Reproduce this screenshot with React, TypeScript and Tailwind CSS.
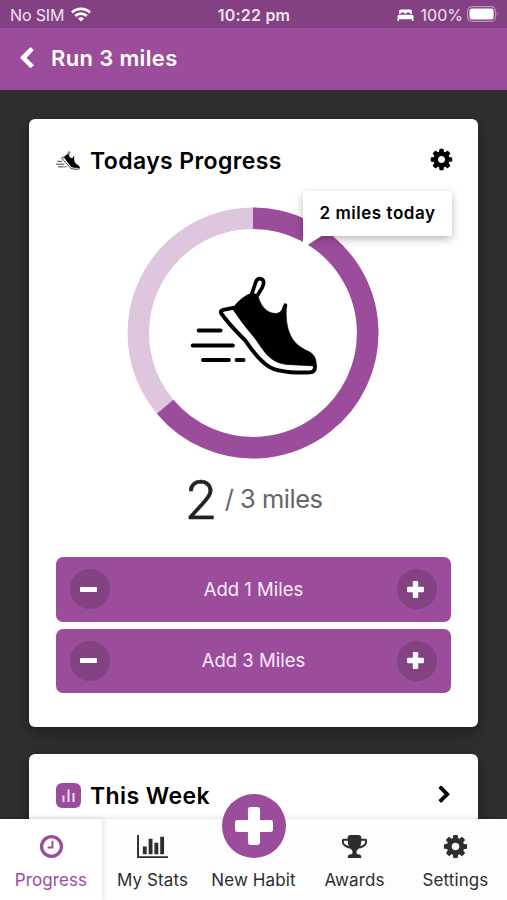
import type { ReactNode } from "react";

const COG =
	"M1152 896q0-106-75-181t-181-75-181 75-75 181 75 181 181 75 181-75 75-181zm512-109v222q0 12-8 23t-20 13l-185 28q-19 54-39 91 35 50 107 138 10 12 10 25t-9 23q-27 37-99 108t-94 71q-12 0-26-9l-138-108q-44 23-91 38-16 136-29 186-7 28-36 28h-222q-14 0-24.5-8.5t-11.5-21.5l-28-184q-49-16-90-37l-141 107q-10 9-25 9-14 0-25-11-126-114-165-168-7-10-7-23 0-12 8-23 15-21 51-66.5t54-70.5q-27-50-41-99l-183-27q-13-2-21-12.5t-8-23.5v-222q0-12 8-23t19-13l186-28q14-46 39-92-40-57-107-138-10-12-10-24 0-10 9-23 26-36 98.5-107.5t94.5-71.5q13 0 26 10l138 107q44-23 91-38 16-136 29-186 7-28 36-28h222q14 0 24.5 8.5t11.5 21.5l28 184q49 16 90 37l142-107q9-9 24-9 13 0 25 10 129 119 165 170 7 8 7 22 0 12-8 23-15 21-51 66.500t-54 70.500q26 50 41 98l183 28q13 2 21 12.500t8 23.500z";
const CLOCK =
	"M1024 544v448q0 14-9 23t-23 9h-320q-14 0-23-9t-9-23v-64q0-14 9-23t23-9h224v-352q0-14 9-23t23-9h64q14 0 23 9t9 23zm416 352q0-148-73-273t-198-198-273-73-273 73-198 198-73 273 73 273 198 198 273 73 273-73 198-198 73-273zm224 0q0 209-103 385.500t-279.500 279.500-385.500 103-385.500-103-279.500-279.500-103-385.500 103-385.500 279.500-279.500 385.500-103 385.500 103 279.500 279.500 103 385.500z";
const BARS =
	"M640 896v512h-256v-512h256zm384-512v1024h-256v-1024h256zm1024 1152v128h-2048v-1536h128v1408h1920zm-640-896v768h-256v-768h256zm384-384v1152h-256v-1152h256z";
const TROPHY =
	"M522 883q-74-162-74-371h-256v96q0 78 94.500 162t235.500 113zm1078-275v-96h-256q0 209-74 371 141-29 235.500-113t94.500-162zm128-128v128q0 71-41.500 143t-112 130-173 97.500-215.500 44.500q-42 54-95 95-38 34-52.500 72.500t-14.500 89.500q0 54 30.500 91t97.500 37q75 0 133.500 45.500t58.500 114.500v64q0 14-9 23t-23 9h-832q-14 0-23-9t-9-23v-64q0-69 58.500-114.500t133.500-45.500q67 0 97.500-37t30.500-91q0-51-14.500-89.500t-52.500-72.500q-53-41-95-95-113-5-215.500-44.500t-173-97.500-112-130-41.500-143v-128q0-40 28-68t68-28h288v-96q0-66 47-113t113-47h576q66 0 113 47t47 113v96h288q40 0 68 28t28 68z";
const CHEVRON =
	"M1427 301l-531 531 531 531q19 19 19 45t-19 45l-166 166q-19 19-45 19t-45-19l-742-742q-19-19-19-45t19-45l742-742q19-19 45-19t45 19l166 166q19 19 19 45t-19 45z";

type GlyphProps = { d: string; className?: string; viewBox?: string };

function Glyph({ d, className, viewBox = "0 0 1792 1792" }: GlyphProps) {
	return (
		<svg viewBox={viewBox} className={className} fill="currentColor">
			<path d={d} />
		</svg>
	);
}

function Shoe({ className }: { className?: string }) {
	return (
		<svg viewBox="60 45 385 305" className={className} fill="none" stroke="#000" strokeLinecap="round" strokeLinejoin="round">
			<path d="M86 211H152M68 256H189M99 300H177M200 300H221" strokeWidth="12" />
			<path
				d="M193 139C206 120 225 106 247 98L264 104C270 132 288 159 317 160C332 159 337 151 341 136L350 138C348 165 349 199 363 227C374 251 394 263 414 273C432 281 440 293 440 318L350 313C313 309 292 289 271 257C256 234 245 222 228 201C212 182 202 164 190 149Z"
				fill="#000"
				strokeWidth="2"
			/>
			<path d="M247 98L258 65C264 49 284 53 281 71C279 83 271 91 264 104" strokeWidth="11" />
			<path d="M342 151L347 135" strokeWidth="11" />
			<path
				d="M190 143L160 149C152 151 151 156 155 161C175 190 205 220 226 241C245 269 266 299 295 318C323 337 370 339 421 337C433 337 436 330 436 318"
				strokeWidth="12"
			/>
		</svg>
	);
}

function Plus({ className }: { className?: string }) {
	return (
		<svg viewBox="0 0 22 22" className={className} fill="currentColor">
			<rect x="0" y="7.5" width="22" height="7" rx="1.4" />
			<rect x="7.500" y="0" width="7" height="22" rx="1.4" />
		</svg>
	);
}

function StatusBar() {
	return (
		<div className="grid h-7 grid-cols-3 items-center bg-[#834183] pt-0.5 pr-2 pl-[10px] text-[16px] text-[#f1e2f1]">
			<div className="flex items-center gap-[6px]">
				<span className="tracking-[-0.15px]">No SIM</span>
				<svg viewBox="0 0 20 15" className="relative -top-px left-px h-[15px] w-5" fill="none" stroke="#fff" strokeWidth="2.700">
					<path d="M1 5.500C6 .6 14 .6 19 5.500M4.200 9C7.500 5.900 12.500 5.900 15.800 9" />
					<path d="M10 14.500L6.900 11.400C8.600 9.800 11.400 9.800 13.100 11.400Z" fill="#fff" stroke="none" />
				</svg>
			</div>
			<div className="pr-[1px] text-center font-semibold tracking-[0.2px] whitespace-nowrap">10:22 pm</div>
			<div className="flex items-center justify-end">
				<svg viewBox="0 0 17 12" className="mr-[7px] h-3 w-[17px]" fill="#fff">
					<path d="M2 5V2.500Q2 .5 4 .5H13Q15 .5 15 2.500V5H13.500Q13.500 3.500 12 3.500H10.500Q9 3.500 9 5H8Q8 3.500 6.500 3.500H5Q3.500 3.500 3.500 5ZM.5 12V7.500Q.5 5.800 2.200 5.800H14.800Q16.500 5.800 16.500 7.500V12H15V10.300H2V12Z" />
				</svg>
				<span className="mr-1">100%</span>
				<svg viewBox="0 0 32 16" className="relative -top-px h-4 w-8">
					<rect x=".6" y=".6" width="28" height="14.800" rx="4.500" fill="none" stroke="#bd93bd" strokeWidth="1.200" />
					<rect x="2.500" y="2.500" width="24.200" height="11" rx="2.500" fill="#fff" />
					<path d="M30.200 6Q32 8 30.200 10Z" fill="#bd93bd" />
				</svg>
			</div>
		</div>
	);
}

function ProgressRing() {
	return (
		<div className="relative mt-[30.500px] ml-[71px] flex h-[252px] w-[252px] items-center justify-center">
			<svg viewBox="-126 -126 252 252" className="absolute inset-0 h-full w-full" fill="none" strokeWidth="21.500">
				<circle r="114.700" stroke="#dfc6df" />
				<path d="M0 -114.700A114.700 114.700 0 1 1 -87.870 73.730" stroke="#9b4c9b" />
			</svg>
			<Shoe className="relative -top-[7px] left-px h-[102px] w-[128px]" />
			{/* Tooltip with its pointer cut into the ring */}
			<div className="absolute -top-4 left-[176px] h-[45px] w-[149px] rounded-[3px] bg-white text-center text-[17px] leading-[44px] font-semibold tracking-[0.55px] whitespace-nowrap shadow-[0_3px_8px_rgba(0,0,0,0.28)]">
				2 miles today
				<svg viewBox="0 0 20 13" className="absolute top-[44px] left-0 h-[13px] w-5" fill="#fff">
					<path d="M0 0H20L0 13Z" />
				</svg>
			</div>
		</div>
	);
}

function AddButton({ label }: { label: string }) {
	return (
		<div className="flex h-[64.500px] items-center justify-between rounded-[7px] bg-[#9b4c9b] px-[14px] text-[#fbebfb]">
			<div className="flex h-10 w-10 items-center justify-center rounded-full bg-[#834383] pr-[3px]">
				<span className="h-[5px] w-[17px] rounded-[1px] bg-white" />
			</div>
			<span className="pt-px text-[18.500px]">{label}</span>
			<div className="flex h-10 w-10 items-center justify-center rounded-full bg-[#834383] pr-[3px] text-white">
				<Plus className="h-[17px] w-[17px]" />
			</div>
		</div>
	);
}

function NavItem({ label, active, children }: { label: string; active?: boolean; children?: ReactNode }) {
	return (
		<div
			className={
				active
					? "flex w-[102px] flex-col items-center bg-white pt-3 text-[#9b4c9b] shadow-[1px_0_5px_rgba(0,0,0,0.12)]"
					: "flex w-[101px] flex-col items-center pt-3 text-[#2b2d2e]"
			}
		>
			<div className="flex h-[30px] items-center justify-center">{children}</div>
			<span className="mt-[7px] text-[17px] leading-6 tracking-[0.1px] whitespace-nowrap">{label}</span>
		</div>
	);
}

export default function App() {
	return (
		<div className="relative flex h-[900px] w-[507px] flex-col overflow-hidden bg-[#2f2f2f] font-[Inter,'Liberation_Sans',sans-serif] text-black">
			<StatusBar />
			<header className="flex h-[62px] shrink-0 items-center bg-[#9b4c9b] pb-[2px] pl-[15px] text-white">
				<Glyph d={CHEVRON} className="h-[23px] w-[23px]" />
				<h1 className="ml-[13px] text-[22px] font-semibold tracking-[0.35px]">Run 3 miles</h1>
			</header>

			<main className="flex min-h-0 flex-1 flex-col gap-[27px] overflow-hidden px-[29px] pt-[28.500px]">
				<section className="h-[608px] shrink-0 rounded-[6px] bg-white px-[27px] pt-[26px] shadow-[0_5px_16px_rgba(0,0,0,0.4)]">
					<div className="flex h-8 items-center">
						<Shoe className="h-[19px] w-6" />
						<h2 className="ml-[10px] pt-[2px] text-[23px] font-semibold tracking-[0.4px]">Todays Progress</h2>
						<Glyph d={COG} className="mr-[-2.500px] mb-[2px] ml-auto h-[25px] w-[25px]" />
					</div>
					<ProgressRing />
					<div className="mt-[11px] flex h-[60px] items-start justify-center">
						<span className="text-[54px] leading-[60px] font-light text-[#222] [-webkit-text-stroke:0.4px_#222]">2</span>
						<span className="ml-[7px] pt-[11px] text-[25.500px] leading-[36px] font-normal tracking-[-0.5px] text-[#666]">/ 3 miles</span>
					</div>
					<div className="mt-[27px] flex flex-col gap-[7px]">
						<AddButton label="Add 1 Miles" />
						<AddButton label="Add 3 Miles" />
					</div>
				</section>

				<section className="h-[200px] shrink-0 rounded-[6px] bg-white px-[27px] pt-[26px] shadow-[0_5px_16px_rgba(0,0,0,0.4)]">
					<div className="flex h-8 items-center">
						<svg viewBox="0 0 25 25" className="h-[25px] w-[25px]">
							<rect width="25" height="25" rx="6" fill="#9b4c9b" />
							<path d="M7.500 12.500V19M12.500 6.500V19M17.500 10V19" stroke="#f2ddf2" strokeWidth="2" />
						</svg>
						<h2 className="ml-[9px] pt-[2px] text-[23px] font-semibold tracking-[0.4px]">This Week</h2>
						<Glyph d={CHEVRON} className="mr-[-3px] mb-1 ml-auto h-[19px] w-[19px] rotate-180" />
					</div>
				</section>
			</main>

			<nav className="relative flex h-[81px] shrink-0 bg-[#fdfdfd] shadow-[0_-1px_5px_rgba(0,0,0,0.12)]">
				<NavItem label="Progress" active>
					<Glyph d={CLOCK} className="h-[27px] w-[27px]" />
				</NavItem>
				<NavItem label="My Stats">
					<Glyph d={BARS} viewBox="0 0 2048 1792" className="h-[27px] w-[31px]" />
				</NavItem>
				<NavItem label="New Habit" />
				<NavItem label="Awards">
					<Glyph d={TROPHY} className="h-[27px] w-[27px]" />
				</NavItem>
				<NavItem label="Settings">
					<Glyph d={COG} className="h-[27px] w-[27px]" />
				</NavItem>
				<div className="absolute -top-[25.500px] left-[222px] flex h-16 w-16 items-center justify-center rounded-full bg-[#9b4c9b] text-white">
					<Plus className="h-[38px] w-[38px]" />
				</div>
			</nav>
		</div>
	);
}
